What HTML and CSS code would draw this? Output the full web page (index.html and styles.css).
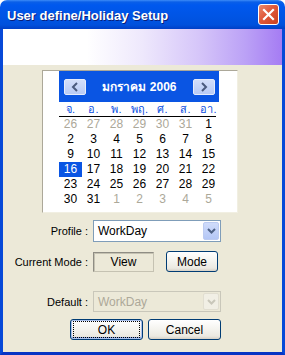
FILE: index.html
```html
<!DOCTYPE html>
<html lang="en">
<head>
    <meta charset="UTF-8">
    <title>User define/Holiday Setup</title>
    <link rel="stylesheet" href="styles.css">
</head>
<body>
    <div class="window">
        <div class="titlebar">
            <span class="title">User define/Holiday Setup</span>
            <span class="close-btn">
                <svg width="13" height="13" viewBox="0 0 13 13"><path d="M2 2 L11 11 M11 2 L2 11" stroke="#fff" stroke-width="2.2" stroke-linecap="square"/></svg>
            </span>
        </div>
        <div class="client">
            <div class="banner"></div>
            <div class="content">
                <!-- Calendar -->
                <div class="calendar">
                    <div class="cal-head">
                        <span class="nav-btn">
                            <svg width="8" height="10" viewBox="0 0 8 10"><path d="M6 1 L2 5 L6 9" fill="none" stroke="#4a5a7e" stroke-width="2"/></svg>
                        </span>
                        <span class="month">มกราคม 2006</span>
                        <span class="nav-btn">
                            <svg width="8" height="10" viewBox="0 0 8 10"><path d="M2 1 L6 5 L2 9" fill="none" stroke="#4a5a7e" stroke-width="2"/></svg>
                        </span>
                    </div>
                    <div class="weekdays">
                        <span>จ.</span><span>อ.</span><span>พ.</span><span>พฤ.</span><span>ศ.</span><span>ส.</span><span>อา.</span>
                    </div>
                    <div class="days">
                        <span class="other">26</span><span class="other">27</span><span class="other">28</span><span class="other">29</span><span class="other">30</span><span class="other">31</span><span>1</span>
                        <span>2</span><span>3</span><span>4</span><span>5</span><span>6</span><span>7</span><span>8</span>
                        <span>9</span><span>10</span><span>11</span><span>12</span><span>13</span><span>14</span><span>15</span>
                        <span class="selected">16</span><span>17</span><span>18</span><span>19</span><span>20</span><span>21</span><span>22</span>
                        <span>23</span><span>24</span><span>25</span><span>26</span><span>27</span><span>28</span><span>29</span>
                        <span>30</span><span>31</span><span class="other">1</span><span class="other">2</span><span class="other">3</span><span class="other">4</span><span class="other">5</span>
                    </div>
                </div>

                <!-- Form -->
                <div class="form-row row-profile">
                    <label class="field-label">Profile :</label>
                    <div class="combo">
                        <span class="combo-text">WorkDay</span>
                        <span class="combo-btn">
                            <svg width="9" height="6" viewBox="0 0 9 6"><path d="M1 1 L4.5 4.5 L8 1" fill="none" stroke="#4d6185" stroke-width="2"/></svg>
                        </span>
                    </div>
                </div>
                <div class="form-row row-mode">
                    <label class="field-label">Current Mode :</label>
                    <div class="mode-box">View</div>
                    <button class="xp-btn mode-btn">Mode</button>
                </div>
                <div class="form-row row-default">
                    <label class="field-label">Default :</label>
                    <div class="combo disabled">
                        <span class="combo-text">WorkDay</span>
                        <span class="combo-btn">
                            <svg width="9" height="6" viewBox="0 0 9 6"><path d="M1 1 L4.5 4.5 L8 1" fill="none" stroke="#c9c7ba" stroke-width="2"/></svg>
                        </span>
                    </div>
                </div>
                <div class="actions">
                    <button class="xp-btn default"><span class="focus">OK</span></button>
                    <button class="xp-btn">Cancel</button>
                </div>
            </div>
        </div>
    </div>
</body>
</html>
```

FILE: styles.css
```css
/* General Styles */
body {
  margin: 0;
  padding: 0;
  background-color: #ffffff;
  font-family: "Liberation Sans", Arial, sans-serif;
  font-size: 11px;
  color: #000;
}

.window {
  width: 285px;
  height: 355px;
  display: flex;
  flex-direction: column;
}

/* Title bar */
.titlebar {
  height: 29px;
  flex: none;
  display: flex;
  align-items: center;
  justify-content: space-between;
  padding: 0 6px 0 7px;
  box-sizing: border-box;
  border-radius: 7px 7px 0 0;
  background: linear-gradient(#3d8cf7 0, #0a5fe8 2px, #0058ee 5px, #0054e3 18px, #0050dc 25px, #003fc6 29px);
}

.title {
  color: #fff;
  font-weight: bold;
  font-size: 13px;
  text-shadow: 1px 1px 0 #0a1e78;
  margin-top: 1px;
}

.close-btn {
  width: 21px;
  height: 21px;
  box-sizing: border-box;
  border: 1px solid #fff;
  border-radius: 3px;
  background: linear-gradient(135deg, #e98a6e 0%, #e0583a 45%, #c9401f 100%);
  display: flex;
  align-items: center;
  justify-content: center;
}

/* Window client area */
.client {
  flex: 1;
  display: flex;
  flex-direction: column;
  border: 3px solid #0749d8;
  border-top: none;
  border-bottom-color: #0734c4;
}

.banner {
  height: 36px;
  flex: none;
  background: linear-gradient(90deg, #ffffff 0%, #ffffff 30%, #eee8fc 50%, #d6c6f9 70%, #bba1f6 87%, #a57cf3 100%);
}

.content {
  flex: 1;
  background-color: #ece9d8;
  padding-top: 5px;
}

/* Calendar */
.calendar {
  margin-left: 39px;
  width: 196px;
  height: 143px;
  box-sizing: border-box;
  background-color: #fff;
  border: 1px solid #aca899;
  border-right-color: #f1efe2;
  border-bottom-color: #f1efe2;
  padding: 0 18px 0 16px;
}

.cal-head {
  height: 31px;
  background-color: #0a55e3;
  display: flex;
  align-items: center;
  justify-content: space-between;
  padding: 0 4px 0 5px;
}

.nav-btn {
  width: 22px;
  height: 16px;
  box-sizing: border-box;
  border: 1px solid #e6ecfb;
  border-radius: 2px;
  background: linear-gradient(#d2defa, #b9cbf5);
  display: flex;
  align-items: center;
  justify-content: center;
}

.month {
  color: #fff;
  font-weight: bold;
  font-size: 12px;
}

.weekdays {
  display: grid;
  grid-template-columns: repeat(7, 23px);
  height: 14px;
  line-height: 14px;
  border-bottom: 1px solid #000;
  margin-right: 3px;
  color: #0a4ee0;
  font-size: 11px;
}

.weekdays span,
.days span {
  text-align: center;
}

.days {
  display: grid;
  grid-template-columns: repeat(7, 23px);
  grid-auto-rows: 15px;
  line-height: 15px;
  font-size: 12px;
}

.days .other {
  color: #aca899;
}

.days .selected {
  background-color: #0a55e3;
  color: #fff;
}

/* Form */
.form-row {
  display: flex;
  align-items: center;
}

.field-label {
  width: 85px;
  text-align: right;
  margin-right: 5px;
}

.row-profile {
  margin-top: 7px;
}

.row-mode {
  margin-top: 9px;
}

.row-default {
  margin-top: 19px;
}

.combo {
  width: 128px;
  height: 22px;
  box-sizing: border-box;
  border: 1px solid #7f9db9;
  background-color: #fff;
  padding: 1px;
  display: flex;
  align-items: center;
  justify-content: space-between;
}

.combo-text {
  padding-left: 3px;
  font-size: 12px;
}

.combo-btn {
  width: 16px;
  height: 18px;
  box-sizing: border-box;
  border: 1px solid #bccbf1;
  border-radius: 2px;
  background: linear-gradient(#d0dcfb, #b4c7f6);
  display: flex;
  align-items: center;
  justify-content: center;
}

.combo.disabled {
  border-color: #c9c7ba;
  background-color: #ece9d8;
  height: 21px;
}

.combo.disabled .combo-text {
  color: #aca899;
}

.combo.disabled .combo-btn {
  height: 17px;
  border-color: #e1ded1;
  background: #f1efe5;
}

.mode-box {
  width: 61px;
  height: 20px;
  box-sizing: border-box;
  border: 1px solid #8f8d84;
  border-right-color: #c5c2b2;
  border-bottom-color: #c5c2b2;
  box-shadow: inset 1px 1px 0 #c5c2b2;
  display: flex;
  align-items: center;
  justify-content: center;
  font-size: 12px;
}

.xp-btn {
  height: 21px;
  box-sizing: border-box;
  border: 1px solid #003c74;
  border-radius: 3px;
  background: linear-gradient(#ffffff 0%, #f4f3ee 50%, #ebe9e1 85%, #d6d0c5 100%);
  font-family: "Liberation Sans", Arial, sans-serif;
  font-size: 12px;
  padding: 0;
  display: flex;
  align-items: center;
  justify-content: center;
}

.mode-btn {
  width: 52px;
  margin-left: 12px;
}

.actions {
  display: flex;
  gap: 5px;
  margin-top: 7px;
  padding-left: 67px;
}

.actions .xp-btn {
  width: 73px;
}

.xp-btn.default {
  box-shadow: inset 0 0 0 1px #a9c0ec, inset 0 -1px 0 1px #8aa8e6;
}

.focus {
  display: flex;
  align-items: center;
  justify-content: center;
  width: 65px;
  height: 15px;
  outline: 1px dotted #000;
}
```
